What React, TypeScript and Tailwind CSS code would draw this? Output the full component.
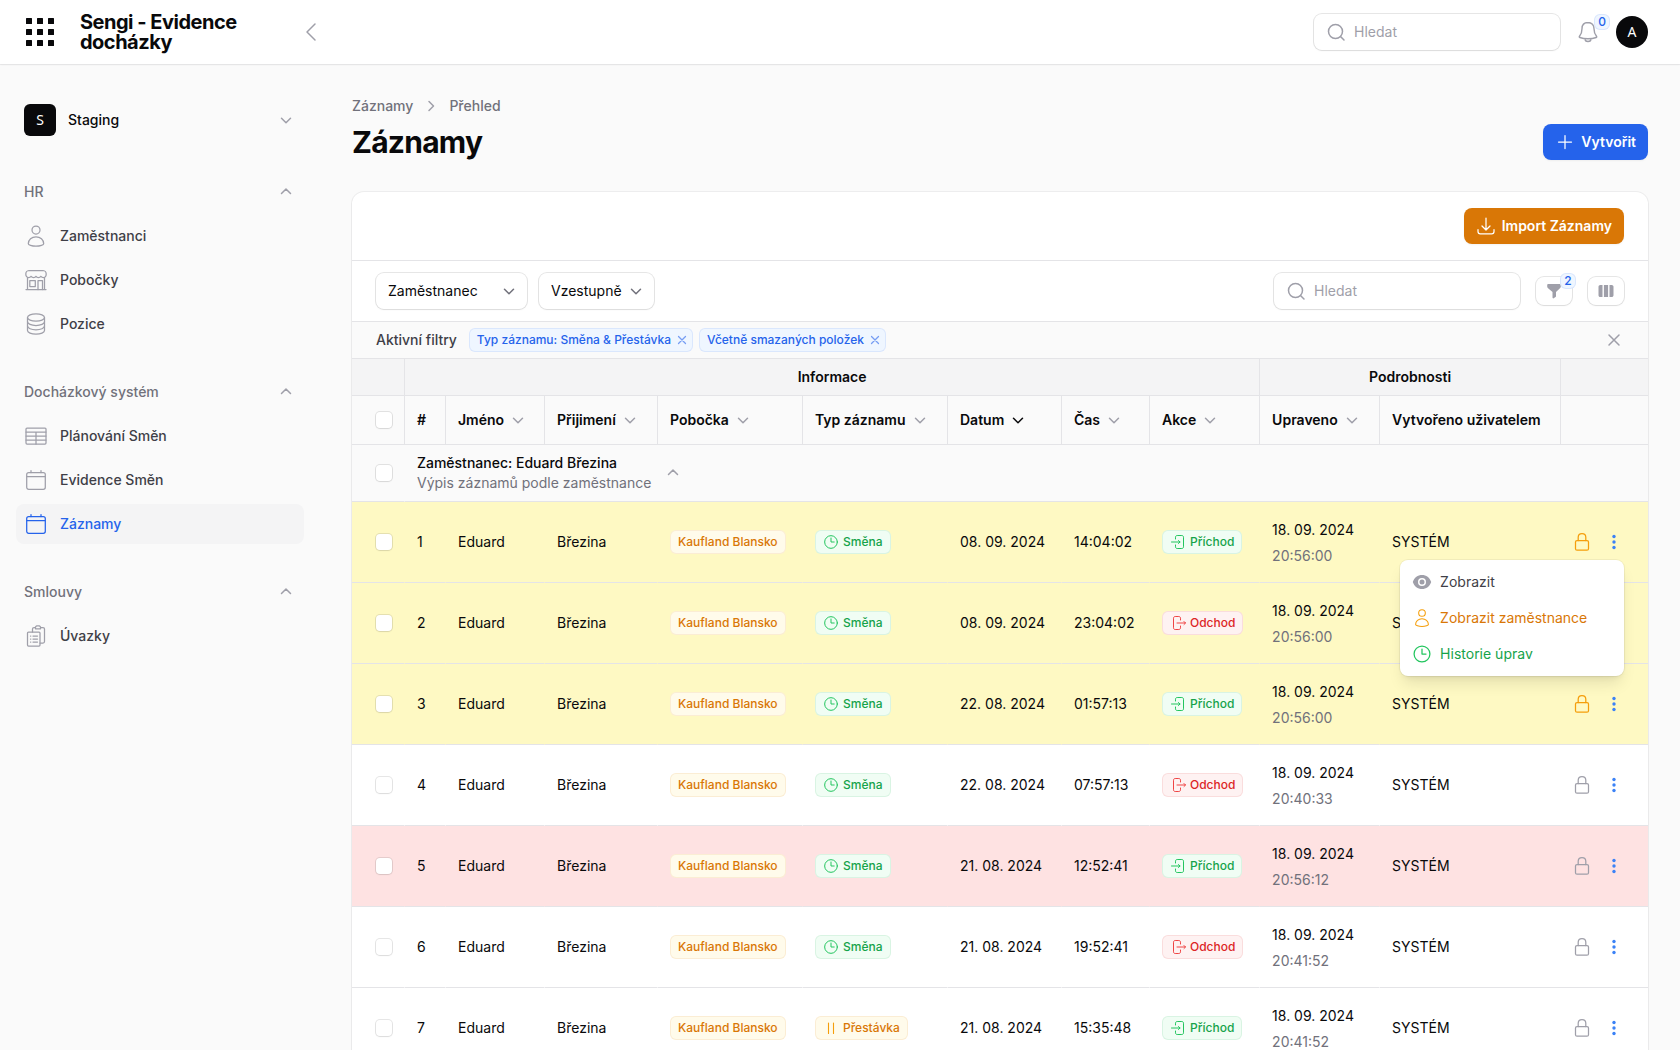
import React from "react";

type IconProps = { className?: string };

function Svg({ className = "", box = 24, width = 1.25, children }: IconProps & { box?: number; width?: number; children: React.ReactNode }) {
  return (
    <svg
      viewBox={`0 0 ${box} ${box}`}
      className={className}
      fill="none"
      stroke="currentColor"
      strokeWidth={width}
      strokeLinecap="round"
      strokeLinejoin="round"
      aria-hidden="true"
    >
      {children}
    </svg>
  );
}

const ChevronDown = ({ className }: IconProps) => (
  <Svg box={20} width={1.5} className={className}><path d="M5.500 8.300 10 12.800 14.500 8.300" /></Svg>
);
const ChevronUp = ({ className }: IconProps) => (
  <Svg box={20} width={1.5} className={className}><path d="M5.5 11.5 10 7l4.5 4.5" /></Svg>
);
const SearchIcon = () => (
  <Svg box={20} width={1.5} className="size-5 shrink-0 text-zinc-400">
    <circle cx="9.5" cy="9.5" r="7" />
    <path d="m14.5 14.5 3.5 3.5" />
  </Svg>
);
const UserIcon = ({ className }: IconProps) => (
  <Svg className={className}>
    <circle cx="12" cy="6" r="4" />
    <path d="M4.3 19.8C4.3 15.7 7.7 12.8 12 12.8s7.700 2.900 7.700 7c0 1-3.400 2.400-7.700 2.400s-7.700-1.400-7.700-2.400Z" />
  </Svg>
);
const StoreIcon = ({ className }: IconProps) => (
  <Svg className={className}>
    <path d="M5 2.500h14c1.900.2 3.200 1.700 3.200 3.500 0 2.200-1.200 3.500-2.700 3.500-1.100 0-2-.4-2.600-1.200-.6.800-1.500 1.200-2.500 1.200s-1.900-.4-2.400-1.200c-.5.8-1.400 1.200-2.400 1.200s-1.900-.4-2.500-1.200c-.6.800-1.500 1.200-2.600 1.200C3 9.500 1.800 8.200 1.800 6c0-1.800 1.300-3.300 3.200-3.500Z" />
    <path d="M3.500 9.500v12M20.500 9.500v12M2 21.500h20" />
    <path d="M5.800 12.500h5.500v6H5.800zM14 21.500v-9h4.500v9" />
  </Svg>
);
const StackIcon = ({ className }: IconProps) => (
  <Svg className={className}>
    <ellipse cx="12" cy="5.500" rx="8.500" ry="3.700" />
    <path d="M3.500 5.500v13c0 2 3.800 3.700 8.500 3.700s8.500-1.700 8.500-3.700v-13" />
    <path d="M3.500 9.800c0 2 3.800 3.700 8.500 3.700s8.500-1.700 8.500-3.700M3.500 14.100c0 2 3.800 3.700 8.500 3.700s8.500-1.700 8.500-3.700" />
  </Svg>
);
const TableIcon = ({ className }: IconProps) => (
  <Svg className={className}>
    <rect x="2" y="4" width="20" height="16" rx="1" />
    <path d="M2 8h20M2 12h20M2 16h20M12 8v12" />
  </Svg>
);
const CalendarIcon = ({ className }: IconProps) => (
  <Svg className={className}>
    <rect x="2.700" y="4.500" width="18.600" height="16.800" rx="2" />
    <path d="M3 8.500h18M7 2.500v2M17 2.500v2" />
  </Svg>
);
const ClipboardIcon = ({ className }: IconProps) => (
  <Svg className={className}>
    <rect x="3.500" y="8" width="12.500" height="14" rx="1" />
    <path d="M8.500 8V5c0-1 .5-1.500 1.500-1.500h1.500M16.500 3.500H19c1 0 1.500.5 1.500 1.500v12.500c0 1-.5 1.500-1.500 1.500h-3M11.500 4.800V3l1-1.200h3L16.500 3v1.800z" />
    <path d="M6.500 12h.3M9 12h4.500M6.500 15h.3M9 15h4.500M6.500 18h.3M9 18h4.500" />
  </Svg>
);
const ClockIcon = ({ className }: IconProps) => (
  <Svg className={className} width={1.500}>
    <circle cx="12" cy="12" r="9.500" />
    <path d="M12 6v6h4.800" />
  </Svg>
);
const EnterIcon = ({ className }: IconProps) => (
  <Svg box={16} width={1} className={className}>
    <path d="M5.500 5V3.200c0-1 .6-1.700 1.700-1.700h4.600c1.100 0 1.700.7 1.700 1.700v9.600c0 1-.6 1.700-1.700 1.700H7.200c-1.100 0-1.700-.7-1.700-1.700V11M1.500 8H10M8.500 6.500 10 8l-1.500 1.500" />
  </Svg>
);
const ExitIcon = ({ className }: IconProps) => (
  <Svg box={16} width={1} className={className}>
    <path d="M10.500 5V3.200c0-1-.6-1.700-1.700-1.700H5.200c-1.100 0-1.700.7-1.700 1.700v9.600c0 1 .6 1.700 1.700 1.700h3.600c1.100 0 1.700-.7 1.700-1.700V11M7 8h8.500M14 6.500 15.500 8 14 9.500" />
  </Svg>
);
const PauseIcon = ({ className }: IconProps) => (
  <Svg box={16} width={1.100} className={className}><path d="M5.500 3v10.500M10.500 3v10.500" /></Svg>
);
const LockIcon = ({ className }: IconProps) => (
  <Svg box={20} width={1.250} className={className}>
    <rect x="3.500" y="8.500" width="13" height="9.700" rx="1.500" />
    <path d="M6.200 8.500V5.300C6.200 3 7.800 1.500 10 1.500s3.800 1.500 3.800 3.800v3.200" />
  </Svg>
);
const CloseIcon = ({ className, width = 1.5 }: IconProps & { width?: number }) => (
  <Svg box={20} width={width} className={className}><path d="m5 5 10 10M15 5 5 15" /></Svg>
);

const navGroups = [
  {
    label: "HR",
    items: [
      { label: "Zaměstnanci", icon: UserIcon },
      { label: "Pobočky", icon: StoreIcon },
      { label: "Pozice", icon: StackIcon },
    ],
  },
  {
    label: "Docházkový systém",
    items: [
      { label: "Plánování Směn", icon: TableIcon },
      { label: "Evidence Směn", icon: CalendarIcon },
      { label: "Záznamy", icon: CalendarIcon, active: true },
    ],
  },
  { label: "Smlouvy", items: [{ label: "Úvazky", icon: ClipboardIcon }] },
] as { label: string; items: { label: string; icon: React.FC<IconProps>; active?: boolean }[] }[];

type Row = {
  n: number;
  type: "Směna" | "Přestávka";
  date: string;
  time: string;
  action: "Příchod" | "Odchod";
  edited: string;
  tone: "yellow" | "red" | "white";
};

const rows: Row[] = [
  { n: 1, type: "Směna", date: "08. 09. 2024", time: "14:04:02", action: "Příchod", edited: "20:56:00", tone: "yellow" },
  { n: 2, type: "Směna", date: "08. 09. 2024", time: "23:04:02", action: "Odchod", edited: "20:56:00", tone: "yellow" },
  { n: 3, type: "Směna", date: "22. 08. 2024", time: "01:57:13", action: "Příchod", edited: "20:56:00", tone: "yellow" },
  { n: 4, type: "Směna", date: "22. 08. 2024", time: "07:57:13", action: "Odchod", edited: "20:40:33", tone: "white" },
  { n: 5, type: "Směna", date: "21. 08. 2024", time: "12:52:41", action: "Příchod", edited: "20:56:12", tone: "red" },
  { n: 6, type: "Směna", date: "21. 08. 2024", time: "19:52:41", action: "Odchod", edited: "20:41:52", tone: "white" },
  { n: 7, type: "Přestávka", date: "21. 08. 2024", time: "15:35:48", action: "Příchod", edited: "20:41:52", tone: "white" },
];

const rowTones = { yellow: "bg-[#fef9c3]", red: "bg-[#fee2e2]", white: "bg-white" };

const badgeTones = {
  amber: "bg-[#fffbeb] text-[#d97706] ring-[#d97706]/10",
  green: "bg-[#f0fdf4] text-[#16a34a] ring-[#16a34a]/10",
  red: "bg-[#fef2f2] text-[#dc2626] ring-[#dc2626]/10",
};

function Badge({ tone, children }: { tone: keyof typeof badgeTones; children: React.ReactNode }) {
  return (
    <span className={`inline-flex items-center gap-1 rounded-md px-2 py-1 align-middle text-xs font-medium ring-1 ring-inset ${badgeTones[tone]}`}>
      {children}
    </span>
  );
}

function Checkbox({ label }: { label: string }) {
  return (
    <input
      type="checkbox"
      aria-label={label}
      className="block size-4 appearance-none rounded-sm bg-white shadow-xs ring-1 ring-zinc-950/10 checked:bg-[#2563eb]"
    />
  );
}

function SearchField({ label }: { label: string }) {
  return (
    <label className="flex h-9 w-[246px] items-center gap-2 rounded-lg bg-white px-3 shadow-xs ring-1 ring-zinc-950/10">
      <SearchIcon />
      <input
        type="search"
        aria-label={label}
        placeholder="Hledat"
        className="w-full min-w-0 text-sm outline-none placeholder:text-zinc-400"
      />
    </label>
  );
}

function SelectField({ label, value, width }: { label: string; value: string; width: string }) {
  return (
    <div className={`relative rounded-lg bg-white shadow-xs ring-1 ring-zinc-950/10 ${width}`}>
      <select aria-label={label} className="h-9 w-full appearance-none pr-8 pl-3 text-sm outline-none">
        <option>{value}</option>
      </select>
      <ChevronDown className="pointer-events-none absolute top-2 right-2 size-5 text-zinc-500" />
    </div>
  );
}

function CountBadge({ place, children }: { place: string; children: React.ReactNode }) {
  return (
    <span className={`absolute flex size-4 items-center justify-center rounded-md bg-blue-50 text-xs font-medium text-[#2563eb] ring-1 ring-[#2563eb]/10 ring-inset ${place}`}>
      {children}
    </span>
  );
}

function FilterChip({ children }: { children: React.ReactNode }) {
  return (
    <span className="flex items-center gap-1 rounded-md bg-blue-50 py-1 pr-1 pl-2 text-xs font-medium text-[#2563eb] ring-1 ring-[#2563eb]/10 ring-inset">
      {children}
      <button type="button" aria-label="Odstranit filtr" className="text-[#2563eb]/60">
        <CloseIcon className="size-3.5" width={1.8} />
      </button>
    </span>
  );
}

function HeadCell({ label, sort = true, active = false }: { label: string; sort?: boolean; active?: boolean }) {
  return (
    <th scope="col" className="h-[49px] border-b border-l border-zinc-200 px-3 text-left font-semibold">
      {sort ? (
        <button type="button" className="flex items-center gap-1 font-semibold">
          {label}
          <ChevronDown className={active ? "size-5 text-zinc-950" : "size-5 text-zinc-400"} />
        </button>
      ) : (
        label
      )}
    </th>
  );
}

function RowMenu() {
  const item = "flex w-full items-center gap-2 rounded-md p-2 text-left text-sm";
  return (
    <div role="menu" className="absolute top-7 right-0 z-10 w-56 rounded-lg bg-white p-1 shadow-lg ring-1 ring-zinc-950/5">
      <button type="button" role="menuitem" className={`${item} text-zinc-700`}>
        <svg viewBox="0 0 20 20" className="size-5 text-zinc-400" fill="currentColor" aria-hidden="true">
          <path fillRule="evenodd" d="M.8 10C2.300 5.600 5.800 3 10 3s7.700 2.600 9.200 7c-1.500 4.400-5 7-9.200 7S2.300 14.400.8 10ZM10 14a4 4 0 1 0 0-8 4 4 0 0 0 0 8Zm0-1.500a2.500 2.500 0 1 0 0-5 2.500 2.500 0 0 0 0 5Z" />
        </svg>
        Zobrazit
      </button>
      <button type="button" role="menuitem" className={`${item} text-[#d97706]`}>
        <UserIcon className="size-5 text-[#f59e0b]" />
        Zobrazit zaměstnance
      </button>
      <button type="button" role="menuitem" className={`${item} text-[#16a34a]`}>
        <ClockIcon className="size-5 text-[#22c55e]" />
        Historie úprav
      </button>
    </div>
  );
}

function RecordRow({ row }: { row: Row }) {
  const cell = "border-b border-l border-b-zinc-200 border-l-transparent px-3 py-4";
  return (
    <tr className={rowTones[row.tone]}>
      <td className="border-b border-zinc-200 pl-6">
        <Checkbox label={`Vybrat záznam ${row.n}`} />
      </td>
      <td className={cell}>{row.n}</td>
      <td className={cell}>Eduard</td>
      <td className={cell}>Březina</td>
      <td className={cell}><Badge tone="amber">Kaufland Blansko</Badge></td>
      <td className={cell}>
        {row.type === "Směna" ? (
          <Badge tone="green"><ClockIcon className="size-4 text-[#22c55e]" />Směna</Badge>
        ) : (
          <Badge tone="amber"><PauseIcon className="size-4 text-[#f59e0b]" />Přestávka</Badge>
        )}
      </td>
      <td className={cell}>{row.date}</td>
      <td className={cell}>{row.time}</td>
      <td className={cell}>
        {row.action === "Příchod" ? (
          <Badge tone="green"><EnterIcon className="size-4 text-[#22c55e]" />Příchod</Badge>
        ) : (
          <Badge tone="red"><ExitIcon className="size-4 text-[#ef4444]" />Odchod</Badge>
        )}
      </td>
      <td className={cell}>
        <p className="leading-6">18. 09. 2024</p>
        <p className="mt-1 text-zinc-500">{row.edited}</p>
      </td>
      <td className={cell}>SYSTÉM</td>
      <td className="border-b border-zinc-200 pr-6">
        <div className="relative flex items-center justify-end gap-3">
          <button type="button" aria-label="Zámek" className={row.tone === "yellow" ? "text-[#f59e0b]" : "text-zinc-400"}>
            <LockIcon className="size-5" />
          </button>
          <button type="button" aria-label="Akce záznamu" className="text-[#3b82f6]">
            <svg viewBox="0 0 20 20" className="size-5" fill="currentColor" aria-hidden="true">
              <circle cx="10" cy="4.500" r="1.700" />
              <circle cx="10" cy="10" r="1.700" />
              <circle cx="10" cy="15.500" r="1.700" />
            </svg>
          </button>
          {row.n === 1 && <RowMenu />}
        </div>
      </td>
    </tr>
  );
}

function Topbar() {
  return (
    <header className="sticky top-0 z-20 flex h-16 items-center bg-white pr-8 pl-6 shadow-xs ring-1 ring-zinc-950/5">
      <button type="button" aria-label="Aplikace" className="shrink-0 pl-0.5">
        <svg viewBox="0 0 28 28" className="size-7" fill="currentColor" aria-hidden="true">
          {[0, 11, 22].map((y) => [0, 11, 22].map((x) => <rect key={`${x}-${y}`} x={x} y={y} width="6" height="6" rx="0.500" />))}
        </svg>
      </button>
      <a href="#" className="ml-[26px] w-44 shrink-0 text-xl/5 font-bold tracking-tight">Sengi - Evidence docházky</a>
      <button type="button" aria-label="Sbalit postranní panel" className="ml-10 text-zinc-400">
        <Svg width={1.500} className="size-6"><path d="m19 4-8 8 8 8" /></Svg>
      </button>
      <div className="ml-auto flex items-center gap-4">
        <SearchField label="Globální hledání" />
        <button type="button" aria-label="Oznámení" className="relative text-zinc-400">
          <Svg width={1.400} className="size-6">
            <path d="M12 2.500c-3.800 0-6 2.600-6 6.200 0 4.300-1.200 6-2.500 7.600-.4.500-.3 1 .3 1.200C6.200 18.300 9 18.700 12 18.700s5.800-.4 8.200-1.200c.6-.2.7-.7.300-1.200-1.300-1.600-2.500-3.300-2.500-7.600 0-3.600-2.200-6.200-6-6.200ZM9 18.700c0 1.600 1.300 2.800 3 2.800s3-1.200 3-2.800" />
          </Svg>
          <CountBadge place="-top-1.5 -right-2.5">0</CountBadge>
        </button>
        <button type="button" aria-label="Uživatel" className="size-8 rounded-full bg-zinc-950 font-['Noto_Sans',sans-serif] text-sm text-white">A</button>
      </div>
    </header>
  );
}

function Sidebar() {
  return (
    <aside className="flex w-80 shrink-0 flex-col gap-7 px-4 py-8">
      <button type="button" className="flex items-center gap-3 p-2 text-left text-sm font-medium">
        <span className="flex size-8 items-center justify-center rounded-md bg-zinc-950 font-['Noto_Sans',sans-serif] text-sm font-normal text-white">S</span>
        <span className="flex-1">Staging</span>
        <ChevronDown className="size-5 text-zinc-400" />
      </button>
      {navGroups.map((group) => (
        <nav key={group.label} aria-label={group.label} className="flex flex-col gap-1">
          <button type="button" className="flex items-center p-2 text-left text-sm/6 font-medium text-zinc-500">
            <span className="flex-1">{group.label}</span>
            <ChevronUp className="size-5 text-zinc-400" />
          </button>
          {group.items.map(({ label, icon: Icon, active }) => (
            <a
              key={label}
              href="#"
              aria-current={active ? "page" : undefined}
              className={`flex items-center gap-3 rounded-lg p-2 text-sm font-medium ${active ? "bg-zinc-100 text-[#2563eb]" : "text-zinc-700"}`}
            >
              <Icon className={active ? "size-6 text-[#2563eb]" : "size-6 text-zinc-400"} />
              {label}
            </a>
          ))}
        </nav>
      ))}
    </aside>
  );
}

const iconButton = "relative flex h-7 w-9 items-center justify-center rounded-lg bg-white text-zinc-400 shadow-xs ring-1 ring-zinc-950/10";

function RecordsTable() {
  const groupCell = "h-[37px] border-b border-l border-zinc-200 font-semibold";
  return (
    <table className="w-full table-fixed border-separate border-spacing-0 text-sm whitespace-nowrap">
      <colgroup>
        <col className="w-[52px]" />
        <col className="w-[41px]" />
        <col className="w-[99px]" />
        <col className="w-[113px]" />
        <col className="w-[145px]" />
        <col className="w-[145px]" />
        <col className="w-[114px]" />
        <col className="w-[88px]" />
        <col className="w-[110px]" />
        <col className="w-[120px]" />
        <col className="w-[181px]" />
        <col className="w-[88px]" />
      </colgroup>
      <thead>
        <tr className="bg-zinc-100">
          <td className="border-b border-zinc-200" />
          <th scope="colgroup" colSpan={8} className={groupCell}>Informace</th>
          <th scope="colgroup" colSpan={2} className={groupCell}>Podrobnosti</th>
          <td className={groupCell} />
        </tr>
        <tr className="bg-[#fafafa]">
          <th className="border-b border-zinc-200 pl-6"><Checkbox label="Vybrat vše" /></th>
          <HeadCell label="#" sort={false} />
          <HeadCell label="Jméno" />
          <HeadCell label="Přijimení" />
          <HeadCell label="Pobočka" />
          <HeadCell label="Typ záznamu" />
          <HeadCell label="Datum" active />
          <HeadCell label="Čas" />
          <HeadCell label="Akce" />
          <HeadCell label="Upraveno" />
          <HeadCell label="Vytvořeno uživatelem" sort={false} />
          <td className="border-b border-l border-zinc-200" />
        </tr>
      </thead>
      <tbody>
        <tr className="bg-[#fafafa]">
          <td className="border-b border-zinc-200 pl-6"><Checkbox label="Vybrat skupinu" /></td>
          <td colSpan={11} className="border-b border-l border-b-zinc-200 border-l-transparent px-3 py-2">
            <div className="flex items-center gap-3">
              <div>
                <p className="font-medium">Zaměstnanec: Eduard Březina</p>
                <p className="text-zinc-500">Výpis záznamů podle zaměstnance</p>
              </div>
              <button type="button" aria-label="Sbalit skupinu" className="text-zinc-400">
                <ChevronUp className="size-5" />
              </button>
            </div>
          </td>
        </tr>
        {rows.map((row) => <RecordRow key={row.n} row={row} />)}
      </tbody>
    </table>
  );
}

export default function App() {
  return (
    <div className="min-h-screen bg-[#fafafa] font-[Inter,sans-serif] text-zinc-950">
      <Topbar />
      <div className="flex items-start">
        <Sidebar />
        <main className="min-w-0 flex-1 px-8 py-8">
          <nav aria-label="Drobečková navigace" className="mb-2 flex items-center gap-2 text-sm font-medium text-zinc-500">
            <a href="#">Záznamy</a>
            <Svg box={20} width={1.500} className="size-5 text-zinc-400"><path d="M8 5.500 12.500 10 8 14.500" /></Svg>
            <a href="#">Přehled</a>
          </nav>
          <div className="mb-8 flex items-center justify-between">
            <h1 className="text-3xl font-bold tracking-tight">Záznamy</h1>
            <button type="button" className="flex items-center gap-1.5 rounded-lg bg-[#2563eb] px-3 py-2 text-sm font-semibold text-white shadow-xs">
              <Svg box={20} width={1.250} className="size-5"><path d="M10 3.500v13M3.500 10h13" /></Svg>
              Vytvořit
            </button>
          </div>
          <section className="overflow-hidden rounded-xl bg-white shadow-xs ring-1 ring-zinc-950/5">
            <div className="flex justify-end border-b border-zinc-200 px-6 py-4">
              <button type="button" className="flex items-center gap-1.5 rounded-lg bg-[#d97706] px-3 py-2 text-sm font-semibold text-white shadow-xs">
                <Svg box={20} width={1.250} className="size-5"><path d="M10 2v11.500M6 10l4 4 4-4M2 13.500v2c0 1.500.8 2.300 2.300 2.300h11.400c1.500 0 2.300-.8 2.300-2.300v-2" /></Svg>
                Import Záznamy
              </button>
            </div>
            <div className="flex items-center gap-3 border-b border-zinc-200 px-6 py-3">
              <SelectField label="Seskupit podle" value="Zaměstnanec" width="w-[151px]" />
              <SelectField label="Směr seskupení" value="Vzestupně" width="w-[115px]" />
              <div className="ml-auto flex items-center gap-4">
                <SearchField label="Hledat v tabulce" />
                <button type="button" aria-label="Filtry" className={iconButton}>
                  <svg viewBox="0 0 20 20" className="size-5" fill="currentColor" aria-hidden="true">
                    <path d="M4.500 3h11c.9 0 1.300.5 1.300 1.200v1.300c0 .6-.2 1-.6 1.400L12 11v4.200c0 .4-.2.700-.5.900l-1.800 1.200c-.6.3-1.200 0-1.200-.7V11L3.800 6.900c-.4-.4-.6-.8-.6-1.400V4.200C3.200 3.500 3.600 3 4.500 3Z" />
                  </svg>
                  <CountBadge place="-top-1 -right-1">2</CountBadge>
                </button>
                <button type="button" aria-label="Sloupce" className={iconButton}>
                  <svg viewBox="0 0 20 20" className="size-5" fill="currentColor" aria-hidden="true">
                    <path d="M4.300 4H6.500v12H4.300C3.300 16 2.500 15.200 2.500 14.200V5.800C2.500 4.800 3.300 4 4.300 4ZM7.900 4h4.200v12H7.900zM13.500 4h2.200c1 0 1.800.8 1.800 1.800v8.400c0 1-.8 1.800-1.800 1.800h-2.200z" />
                  </svg>
                </button>
              </div>
            </div>
            <div className="flex items-center gap-3 border-b border-zinc-200 bg-[#fafafa] px-6 py-1.5">
              <span className="text-sm font-medium text-zinc-700">Aktivní filtry</span>
              <div className="flex gap-1.5">
                <FilterChip>Typ záznamu: Směna &amp; Přestávka</FilterChip>
                <FilterChip>Včetně smazaných položek</FilterChip>
              </div>
              <button type="button" aria-label="Odstranit všechny filtry" className="ml-auto text-zinc-400">
                <CloseIcon className="size-5" />
              </button>
            </div>
            <RecordsTable />
          </section>
        </main>
      </div>
    </div>
  );
}
